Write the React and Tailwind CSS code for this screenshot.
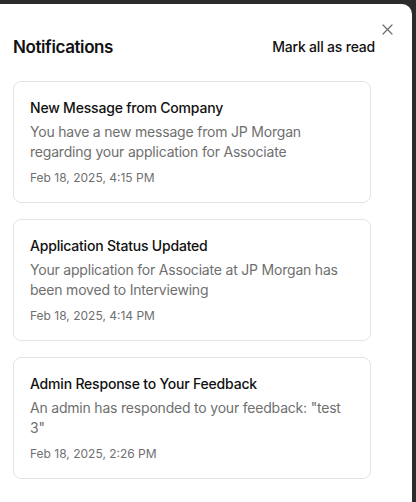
import React from 'react';

const notifications = [
  {
    id: 1,
    title: 'New Message from Company',
    body: 'You have a new message from JP Morgan regarding your application for Associate',
    date: 'Feb 18, 2025, 4:15 PM',
  },
  {
    id: 2,
    title: 'Application Status Updated',
    body: 'Your application for Associate at JP Morgan has been moved to Interviewing',
    date: 'Feb 18, 2025, 4:14 PM',
  },
  {
    id: 3,
    title: 'Admin Response to Your Feedback',
    body: 'An admin has responded to your feedback: "test 3"',
    date: 'Feb 18, 2025, 2:26 PM',
  },
];

const App = () => {
  return (
    <div className="w-[416px] h-[502px] bg-[#2b2b2b] pt-[4px] overflow-hidden font-['Inter',sans-serif]">
      <div className="relative w-[412px] h-[498px] bg-white rounded-tr-[10px] pl-[13px] pt-[29px]">
        {/* Close */}
        <button className="absolute top-[19px] right-[19px] w-[12px] h-[12px] flex items-center justify-center text-[#6b6b6b]">
          <svg width="11" height="11" viewBox="0 0 11 11" fill="none" stroke="currentColor" strokeWidth="1.2" strokeLinecap="round">
            <path d="M1 1L10 10M10 1L1 10" />
          </svg>
        </button>

        {/* Header */}
        <div className="w-[362px] h-[28px] flex items-center justify-between">
          <h2 className="text-[17px] leading-[28px] font-semibold text-[#111111] tracking-[-0.4px]">Notifications</h2>
          <button className="text-[14px] leading-[28px] font-medium text-[#111111] tracking-[-0.2px]">Mark all as read</button>
        </div>

        {/* List */}
        <div className="mt-[20px] w-[358px] flex flex-col gap-[16px]">
          {notifications.map((n) => (
            <div key={n.id} className="border border-[#e4e4e7] rounded-[8px] p-[16px]">
              <div className="text-[14px] leading-[20px] font-medium text-[#111111] tracking-[-0.2px]">{n.title}</div>
              <div className="mt-[4px] text-[14px] leading-[20px] text-[#6f6f6f] tracking-[-0.2px]">{n.body}</div>
              <div className="mt-[8px] text-[12px] leading-[16px] text-[#6f6f6f]">{n.date}</div>
            </div>
          ))}
        </div>
      </div>
    </div>
  );
};

export default App;
